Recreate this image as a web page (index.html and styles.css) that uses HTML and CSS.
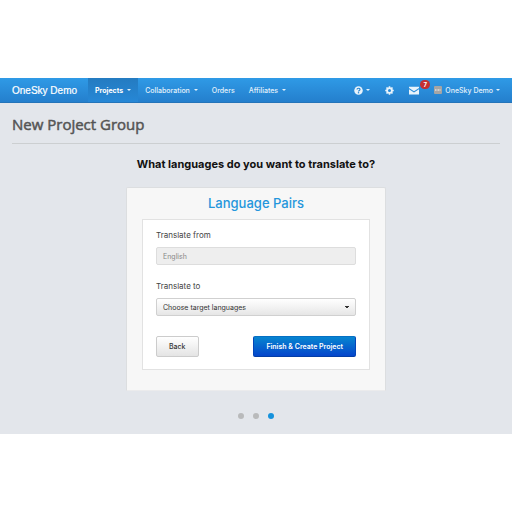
FILE: index.html
```html
<!DOCTYPE html>
<html lang="en">
<head>
    <meta charset="UTF-8">
    <meta name="viewport" content="width=device-width, initial-scale=1.0">
    <title>New Project Group</title>
    <link rel="stylesheet" href="styles.css">
</head>
<body>
    <div class="page">
        <!-- Navbar section -->
        <nav class="navbar">
            <a href="#" class="brand">OneSky Demo</a>
            <a href="#" class="nav-link active">Projects <span class="caret"></span></a>
            <a href="#" class="nav-link">Collaboration <span class="caret"></span></a>
            <a href="#" class="nav-link">Orders</a>
            <a href="#" class="nav-link">Affiliates <span class="caret"></span></a>

            <div class="nav-right">
                <a href="#" class="nav-icon" aria-label="Help">
                    <svg width="9" height="9" viewBox="0 0 18 18">
                        <circle cx="9" cy="9" r="8.5" fill="#e8f3fb"/>
                        <path d="M6 7.2C6 3.6 12 3.6 12 7C12 9 9 8.8 9 11" fill="none" stroke="#2987d3" stroke-width="2.4"/>
                        <circle cx="9" cy="13.6" r="1.5" fill="#2987d3"/>
                    </svg>
                    <span class="caret"></span>
                </a>
                <a href="#" class="nav-icon" aria-label="Settings">
                    <svg width="9" height="9" viewBox="0 0 18 18" fill="none" stroke="#e8f3fb">
                        <circle cx="9" cy="9" r="4.8" stroke-width="3.6"/>
                        <path d="M9 0.5V4M9 14V17.5M0.5 9H4M14 9H17.5M3 3L5.5 5.5M12.5 12.5L15 15M15 3L12.5 5.5M5.5 12.5L3 15" stroke-width="3.2"/>
                    </svg>
                </a>
                <a href="#" class="nav-icon mail" aria-label="Messages">
                    <svg width="10" height="9" viewBox="0 0 20 18" fill="#e8f3fb">
                        <path d="M0 1.5H20V4L10 10.5L0 4Z"/>
                        <path d="M0 6.5L10 13L20 6.5V17H0Z"/>
                    </svg>
                    <span class="badge">7</span>
                </a>
                <a href="#" class="nav-icon user">
                    <svg width="8" height="8" viewBox="0 0 16 16">
                        <rect width="16" height="16" rx="2" fill="#a5a5a5"/>
                        <path d="M2 8H14" stroke="#dedede" stroke-width="3" stroke-dasharray="2 1"/>
                    </svg>
                    OneSky Demo <span class="caret"></span>
                </a>
            </div>
        </nav>

        <main class="content">
            <h1>New Project Group</h1>
            <h2>What languages do you want to translate to?</h2>

            <!-- Form section -->
            <div class="card">
                <h3>Language Pairs</h3>
                <form class="form-box">
                    <label for="from">Translate from</label>
                    <input type="text" id="from" class="field" value="English" disabled>

                    <label for="to">Translate to</label>
                    <select id="to" class="field">
                        <option>Choose target languages</option>
                    </select>

                    <div class="buttons">
                        <button type="button" class="btn">Back</button>
                        <button type="button" class="btn btn-primary">Finish &amp; Create Project</button>
                    </div>
                </form>
            </div>

            <!-- Steps section -->
            <div class="steps">
                <span class="dot"></span>
                <span class="dot"></span>
                <span class="dot current"></span>
            </div>
        </main>
    </div>
</body>
</html>
```
FILE: styles.css
```css
* {
    box-sizing: border-box;
}

body {
    font-family: Inter, "Liberation Sans", Arial, sans-serif;
    font-size: 7px;
    margin: 0;
    padding: 78px 0;
    background-color: #fff;
}

.page {
    background-color: #e3e6eb;
}

.navbar {
    display: flex;
    height: 25px;
    padding: 0 12px;
    background: linear-gradient(#2f9ae6, #247fcd);
    border-bottom: 1px solid #2474b9;
}

.navbar a {
    display: flex;
    align-items: center;
    color: #e3f1fb;
    text-decoration: none;
    white-space: nowrap;
}

.navbar .brand {
    font-family: "Liberation Sans", Arial, sans-serif;
    font-size: 10px;
    -webkit-text-stroke: 0.2px #fff;
    color: #fff;
    margin-right: 11px;
}

.navbar .nav-link {
    font-weight: 500;
    padding: 0 7px;
    gap: 4px;
}

.navbar .active {
    font-weight: bold;
    color: #fff;
    background: linear-gradient(#247bc1, #2687d6);
}

.caret {
    border-left: 2px solid transparent;
    border-right: 2px solid transparent;
    border-top: 2px solid #e3f1fb;
}

.nav-right {
    display: flex;
    gap: 15px;
    margin-left: auto;
}

.navbar .nav-icon {
    gap: 3px;
}

.navbar .user {
    font-weight: 500;
}

.mail {
    position: relative;
}

.badge {
    position: absolute;
    top: 2px;
    left: 11px;
    width: 10px;
    height: 9px;
    border-radius: 5px;
    background-color: #c62f2f;
    color: #fff;
    font-size: 6px;
    font-weight: bold;
    line-height: 9px;
    text-align: center;
}

.content {
    padding: 11px 12px 15px;
}

h1 {
    font-family: "Open Sans", sans-serif;
    font-size: 15px;
    font-weight: 400;
    -webkit-text-stroke: 0.5px #555;
    line-height: 20px;
    color: #555;
    margin: 0;
    padding-bottom: 9px;
    border-bottom: 1px solid #cccfd1;
}

h2 {
    font-size: 11px;
    font-weight: 700;
    line-height: 14px;
    text-align: center;
    color: #111;
    margin: 13px 0 16px;
}

.card {
    width: 100%;
    max-width: 260px;
    margin: 0 auto;
    padding: 7px 15px 20px;
    background-color: #f7f7f7;
    border: 1px solid #dcdee0;
    border-bottom-color: #ebebec;
    border-radius: 2px 2px 0 0;
}

h3 {
    font-size: 13px;
    font-weight: 500;
    line-height: 16px;
    text-align: center;
    color: #2496dc;
    margin: 0 0 8px;
}

.form-box {
    padding: 10px 13px 12px;
    background-color: #fff;
    border: 1px solid #e2e2e2;
}

label {
    display: block;
    font-size: 8px;
    line-height: 10px;
    color: #444;
    margin-bottom: 7px;
}

.field {
    display: block;
    width: 100%;
    height: 18px;
    font-family: inherit;
    font-size: 7px;
    color: #333;
    padding: 0 6px;
    margin-bottom: 16px;
    border: 1px solid #d0d0d0;
    border-radius: 2px;
}

input.field {
    color: #888;
    background-color: #eee;
    border-color: #ddd;
}

select.field {
    appearance: none;
    background: linear-gradient(45deg, transparent 50%, #333 50%) right 8px center / 2px 2px no-repeat, linear-gradient(-45deg, transparent 50%, #333 50%) right 6px center / 2px 2px no-repeat, linear-gradient(#fff, #e6e6e6);
    margin-bottom: 20px;
}

.buttons {
    display: flex;
    justify-content: space-between;
}

.btn {
    height: 21px;
    font-family: inherit;
    font-size: 7px;
    font-weight: 500;
    color: #333;
    padding: 0 12px;
    background: linear-gradient(#fff, #e4e4e4);
    border: 1px solid #ccc;
    border-radius: 2px;
}

.btn-primary {
    font-weight: 600;
    color: #fff;
    background: linear-gradient(#0785d0, #0445cb);
    border-color: #0670c4 #0445b8 #033da5;
}

.steps {
    display: flex;
    justify-content: center;
    gap: 9px;
    margin-top: 22px;
}

.dot {
    width: 6px;
    height: 6px;
    border-radius: 50%;
    background-color: #b9babb;
}

.current {
    background-color: #1692dc;
}
```
